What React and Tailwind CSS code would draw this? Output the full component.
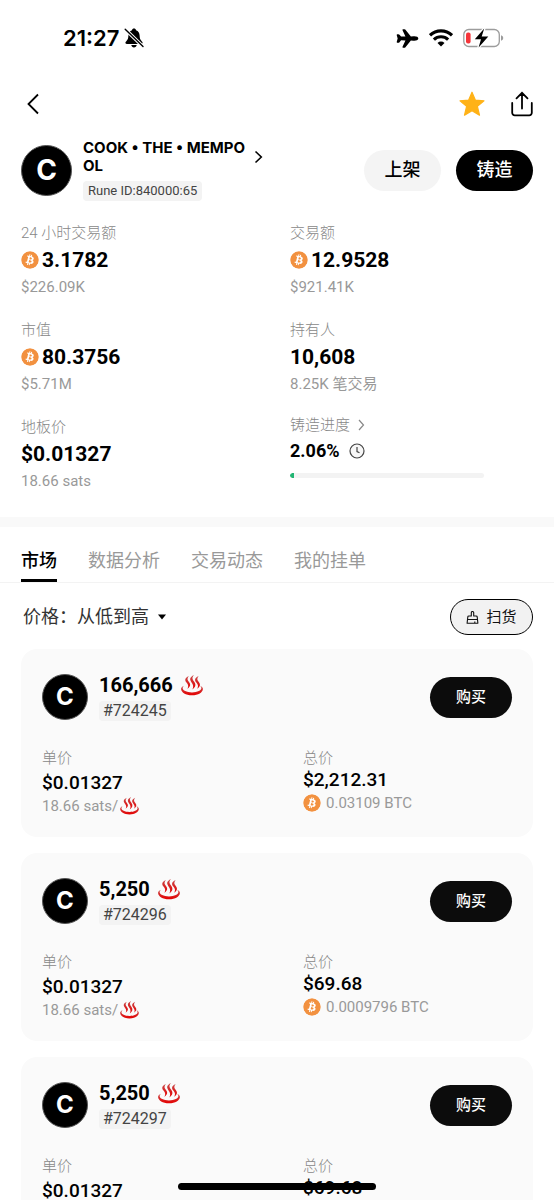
import { useId, useState } from "react";
import { IoAirplane } from "react-icons/io5";
import { FaBitcoin } from "react-icons/fa";

const stats = [
  { label: "24 小时交易额", value: "3.1782", note: "$226.09K", btc: true },
  { label: "交易额", value: "12.9528", note: "$921.41K", btc: true },
  { label: "市值", value: "80.3756", note: "$5.71M", btc: true },
  { label: "持有人", value: "10,608", note: "8.25K 笔交易" },
  { label: "地板价", value: "$0.01327", note: "18.66 sats" },
];

const tabs = ["市场", "数据分析", "交易动态", "我的挂单"];

const listings = [
  { id: "#724245", amount: "166,666", unit: "$0.01327", sats: "18.66 sats/", total: "$2,212.31", btc: "0.03109 BTC" },
  { id: "#724296", amount: "5,250", unit: "$0.01327", sats: "18.66 sats/", total: "$69.68", btc: "0.0009796 BTC" },
  { id: "#724297", amount: "5,250", unit: "$0.01327", sats: "18.66 sats/", total: "$69.68", btc: "0.0009796 BTC" },
];

function BellOff() {
  return (
    <svg viewBox="0 0 20 20" className="size-5" aria-hidden="true">
      <path
        d="M10 .6c-1.100 0-1.900.7-2 1.600C5.600 3 4.500 5.100 4.400 7.600c-.1 3-.7 4.200-2.100 5.600-.6.600-.9 1-.9 1.600 0 .7.500 1.200 1.400 1.200h14.400c.9 0 1.400-.5 1.400-1.200 0-.6-.3-1-.9-1.600-1.400-1.400-2-2.600-2.100-5.600C15.500 5.100 14.400 3 12 2.200 11.900 1.300 11.100.6 10 .6zM7.300 17h5.400c-.2 1.500-1.300 2.400-2.700 2.400S7.500 18.500 7.300 17z"
        fill="#000"
      />
      <path d="M1.200 1.200 19 18.600" stroke="#fff" strokeWidth="3.400" />
      <path d="M1.200 1.200 19 18.600" stroke="#000" strokeWidth="1.400" strokeLinecap="round" />
    </svg>
  );
}

function Wifi() {
  return (
    <svg viewBox="0 0 24 18" className="h-[18px] w-6" fill="none" stroke="#000" strokeWidth="3.100" aria-hidden="true">
      <path d="M1 6.300a15.800 15.800 0 0 1 22 0" />
      <path d="M4.900 10.600a10.200 10.200 0 0 1 14.200 0" />
      <path d="M12 17.500 8.500 14a5 5 0 0 1 7 0z" fill="#000" stroke="none" />
    </svg>
  );
}

function Battery() {
  return (
    <svg viewBox="0 0 41 20" className="h-5 w-[41px]" aria-hidden="true">
      <rect x=".8" y="1.500" width="35.500" height="17" rx="5" fill="#fff" stroke="#9c9c9c" strokeWidth="1.300" />
      <path d="M38 7.300c1.400.4 2.200 1.400 2.200 2.700s-.8 2.300-2.200 2.700z" fill="#9c9c9c" />
      <rect x="3" y="4.500" width="4.600" height="11" rx="2" fill="#f5353a" />
      <path d="M21.200.6 11.800 11.300h6.200L15.600 19.400l9.700-11h-6.600z" fill="#000" stroke="#fff" strokeWidth="2.600" paintOrder="stroke" strokeLinejoin="round" />
    </svg>
  );
}

function HotSpring({ className }) {
  const id = useId();
  return (
    <svg viewBox="0 0 22 21" className={className} aria-label="♨" role="img">
      <defs>
        <linearGradient id={id} x1="0" y1="0" x2="0" y2="1">
          <stop offset="0" stopColor="#c84848" />
          <stop offset="1" stopColor="#e60000" />
        </linearGradient>
      </defs>
      <g fill={`url(#${id})`}>
        <path d="M2.900 10.800C1 11.600.1 12.700.1 14c0 3.300 4.700 6.300 10.900 6.300S21.900 17.300 21.900 14c0-1.300-.9-2.400-2.800-3.200.9.800 1.300 1.500 1.300 2.300 0 2.400-4 4.300-9.400 4.300s-9.400-1.900-9.400-4.300c0-.8.400-1.500 1.300-2.300z" />
        <path d="M7.800.9C3.900 3 3.500 4.900 5.500 7.500c1.800 2.300 2.300 3.900.9 6.300 3.200-2.200 3.500-4.200 1.600-6.700C6.200 4.700 5.900 3.400 7.800.9z" />
        <path d="M12.900.1C8.800 2.300 8.300 4.400 10.400 7.200c1.900 2.600 2.400 4.500 1 7.300 3.400-2.500 3.800-4.900 1.800-7.700C11.200 4.100 10.800 2.700 12.900.1z" />
        <path d="M17.600.9c-3.900 2.100-4.300 4-2.300 6.600 1.800 2.300 2.300 3.900.9 6.300 3.200-2.200 3.500-4.200 1.600-6.700-1.800-2.400-2.100-3.700-.2-6.200z" />
      </g>
    </svg>
  );
}

function Btc() {
  return <FaBitcoin className="size-[18px] shrink-0 rounded-full bg-white text-[#f29140]" aria-hidden="true" />;
}

function Coin({ className }) {
  return (
    <span className={`flex shrink-0 items-center justify-center rounded-full border border-[#555] bg-black font-['Inter',sans-serif] font-bold text-white ${className}`}>
      C
    </span>
  );
}

function Listing({ item }) {
  return (
    <li className="rounded-2xl bg-[#fafafa] px-[21px] pt-6 pb-[23px]">
      <div className="flex items-center">
        <Coin className="size-[46px] text-2xl" />
        <div className="ml-[11px] flex flex-1 flex-col items-start gap-1">
          <div className="flex items-center gap-2 text-xl leading-6 font-bold">
            {item.amount}
            <HotSpring className="h-[21px] w-[22px]" />
          </div>
          <span className="rounded-sm bg-[#f3f3f3] px-1 text-base leading-5 text-[#444]">{item.id}</span>
        </div>
        <button type="button" className="h-[41px] w-[82px] rounded-full bg-[#0c0c0c] text-[15px] font-medium text-white">
          购买
        </button>
      </div>
      <dl className="mt-[27px] grid grid-cols-2 gap-[52px] text-[15px] text-[#888]">
        <div>
          <dt className="leading-5 font-light">单价</dt>
          <dd className="text-[19px] leading-[30px] font-medium text-black">{item.unit}</dd>
          <dd className="flex h-4 items-center gap-0.5 text-[#999]">
            {item.sats}
            <HotSpring className="h-[18px] w-[19px]" />
          </dd>
        </div>
        <div>
          <dt className="leading-5 font-light">总价</dt>
          <dd className="text-[19px] leading-6 font-medium text-black">{item.total}</dd>
          <dd className="flex items-center gap-[5px] leading-[22px] whitespace-nowrap text-[#999]">
            <Btc />
            {item.btc}
          </dd>
        </div>
      </dl>
    </li>
  );
}

export default function App() {
  const [tab, setTab] = useState(tabs[0]);
  return (
    <div className="relative h-screen overflow-hidden bg-white font-['Roboto','Noto_Sans_CJK_SC',sans-serif] text-black">
      <div className="flex h-[76px] items-center justify-between pr-[50px] pl-[63px]">
        <div className="flex items-center gap-[5px] font-['Inter',sans-serif] text-[22px] font-semibold">
          21:27
          <BellOff />
        </div>
        <div className="flex items-center gap-[10px]">
          <IoAirplane className="size-[23px]" aria-hidden="true" />
          <Wifi />
          <Battery />
        </div>
      </div>

      <header className="flex h-14 items-center justify-between px-[21px]">
        <button type="button" aria-label="返回" className="p-1">
          <svg viewBox="0 0 16 22" className="h-[22px] w-4" fill="none" stroke="#000" strokeWidth="1.800">
            <path d="M13 1.500 3.500 11l9.500 9.500" />
          </svg>
        </button>
        <div className="flex items-center gap-[26px]">
          <button type="button" aria-label="收藏">
            <svg viewBox="0 0 26 26" className="size-[26px]" fill="#ffb217" stroke="#ffb217" strokeWidth="1.200" strokeLinejoin="round">
              <path d="m13 1.200 3.300 7.900 8.700.7-6.600 5.600 2.100 8.800-7.500-4.500-7.500 4.500 2.100-8.800L1 9.800l8.700-.7z" />
            </svg>
          </button>
          <button type="button" aria-label="分享">
            <svg viewBox="0 0 22 26" className="h-[26px] w-[22px]" fill="none" stroke="#000" strokeWidth="1.800" strokeLinecap="round">
              <path d="M1.200 12v9.800a2.500 2.500 0 0 0 2.500 2.500h14.600a2.500 2.500 0 0 0 2.500-2.500V12M11 17.500V2M5.500 7.300 11 1.800l5.500 5.500" />
            </svg>
          </button>
        </div>
      </header>

      <section className="flex items-center px-[21px] pt-[7px]">
        <Coin className="size-[51px] text-[28px]" />
        <div className="ml-[11px] flex-1">
          <a href="#rune" className="flex items-center gap-1">
            <h1 className="w-[167px] font-['Inter',sans-serif] text-[15px] leading-[18px] font-bold break-all">COOK • THE • MEMPOOL</h1>
            <svg viewBox="0 0 9 14" className="h-3.5 w-[9px]" fill="none" stroke="#000" strokeWidth="1.600">
              <path d="m1.500 1.500 5.800 5.500-5.800 5.500" />
            </svg>
          </a>
          <span className="mt-1.5 block w-fit rounded-sm bg-[#f3f3f3] px-[5px] text-[13px] leading-5 text-[#444]">
            Rune ID:840000:65
          </span>
        </div>
        <div className="flex gap-[15px] text-lg font-medium">
          <button type="button" className="h-[41px] w-[77px] rounded-full bg-[#f4f4f4]">上架</button>
          <button type="button" className="h-[41px] w-[77px] rounded-full bg-black text-white">铸造</button>
        </div>
      </section>

      <dl className="mt-5 grid grid-cols-2 gap-x-[26px] gap-y-[19px] px-[21px] pb-6 text-[15px] leading-6 text-[#999]">
        {stats.map((s) => (
          <div key={s.label}>
            <dt className="font-light text-[#888]">{s.label}</dt>
            <dd className="flex items-center gap-[3px] text-[21px] leading-[30px] font-bold text-black">
              {s.btc && <Btc />}
              {s.value}
            </dd>
            <dd>{s.note}</dd>
          </div>
        ))}
        <div>
          <dt className="leading-5 font-light text-[#888]">
            <a href="#mint" className="flex items-center gap-2">
              铸造进度
              <svg viewBox="0 0 7 12" className="h-3 w-[7px]" fill="none" stroke="#888" strokeWidth="1.200">
                <path d="m1 1 4.500 5L1 11" />
              </svg>
            </a>
          </dt>
          <dd className="flex items-center gap-2 text-lg leading-8 font-bold text-black">
            2.06%
            <svg viewBox="0 0 18 18" className="size-[18px]" fill="none" stroke="#444" strokeWidth="1.200" aria-hidden="true">
              <circle cx="9" cy="9" r="7" fill="#f7f7f7" />
              <path d="M9 5v4.500l2.500 1.200" />
            </svg>
          </dd>
          <dd className="mt-1.5 h-[5px] w-4/5 overflow-hidden rounded-full bg-[#f3f3f3]">
            <div className="h-full rounded-l-full bg-[#22b573]" style={{ width: "2.06%" }} />
          </dd>
        </div>
      </dl>

      <div className="h-2.5 bg-[#f9f9f9]" />

      <nav className="flex h-14 gap-[31px] border-b border-[#f3f3f3] px-[21px] text-lg">
        {tabs.map((name) => (
          <button
            key={name}
            type="button"
            onClick={() => setTab(name)}
            className={`border-b-3 pt-4 ${name === tab ? "border-black font-medium text-black" : "border-transparent text-[#999]"}`}
          >
            {name}
          </button>
        ))}
      </nav>

      <div className="flex items-center justify-between px-[21px] pt-4 pb-3.5">
        <div className="flex items-center pl-0.5 text-lg text-[#333]">
          <label htmlFor="sort">价格：</label>
          <select id="sort" className="appearance-none bg-transparent">
            <option>从低到高</option>
            <option>从高到低</option>
          </select>
          <svg viewBox="0 0 8 6" className="ml-[9px] h-1.5 w-2" aria-hidden="true">
            <path d="M0 .5h8L4 5.500z" fill="#000" />
          </svg>
        </div>
        <button type="button" className="flex h-9 w-[83px] items-center justify-center gap-[7px] rounded-full border border-black bg-[#f2f2f2] text-[15px] text-[#111]">
          <svg viewBox="0 0 13 13" className="size-[13px]" fill="none" stroke="#111" strokeWidth="1.100" strokeLinejoin="round" aria-hidden="true">
            <path d="M5.300 5V1.700a1.200 1.200 0 0 1 2.400 0V5h2.500a1 1 0 0 1 1 .9l.7 6.300H1.100l.7-6.300a1 1 0 0 1 1-.9zM1.500 8.500h10M8.800 12v-1.600" />
          </svg>
          扫货
        </button>
      </div>

      <ul className="flex flex-col gap-4 px-[21px]">
        {listings.map((item) => (
          <Listing key={item.id} item={item} />
        ))}
      </ul>

      <div className="absolute bottom-2.5 left-1/2 h-[7px] w-[198px] -translate-x-1/2 rounded-full bg-black" />
    </div>
  );
}
